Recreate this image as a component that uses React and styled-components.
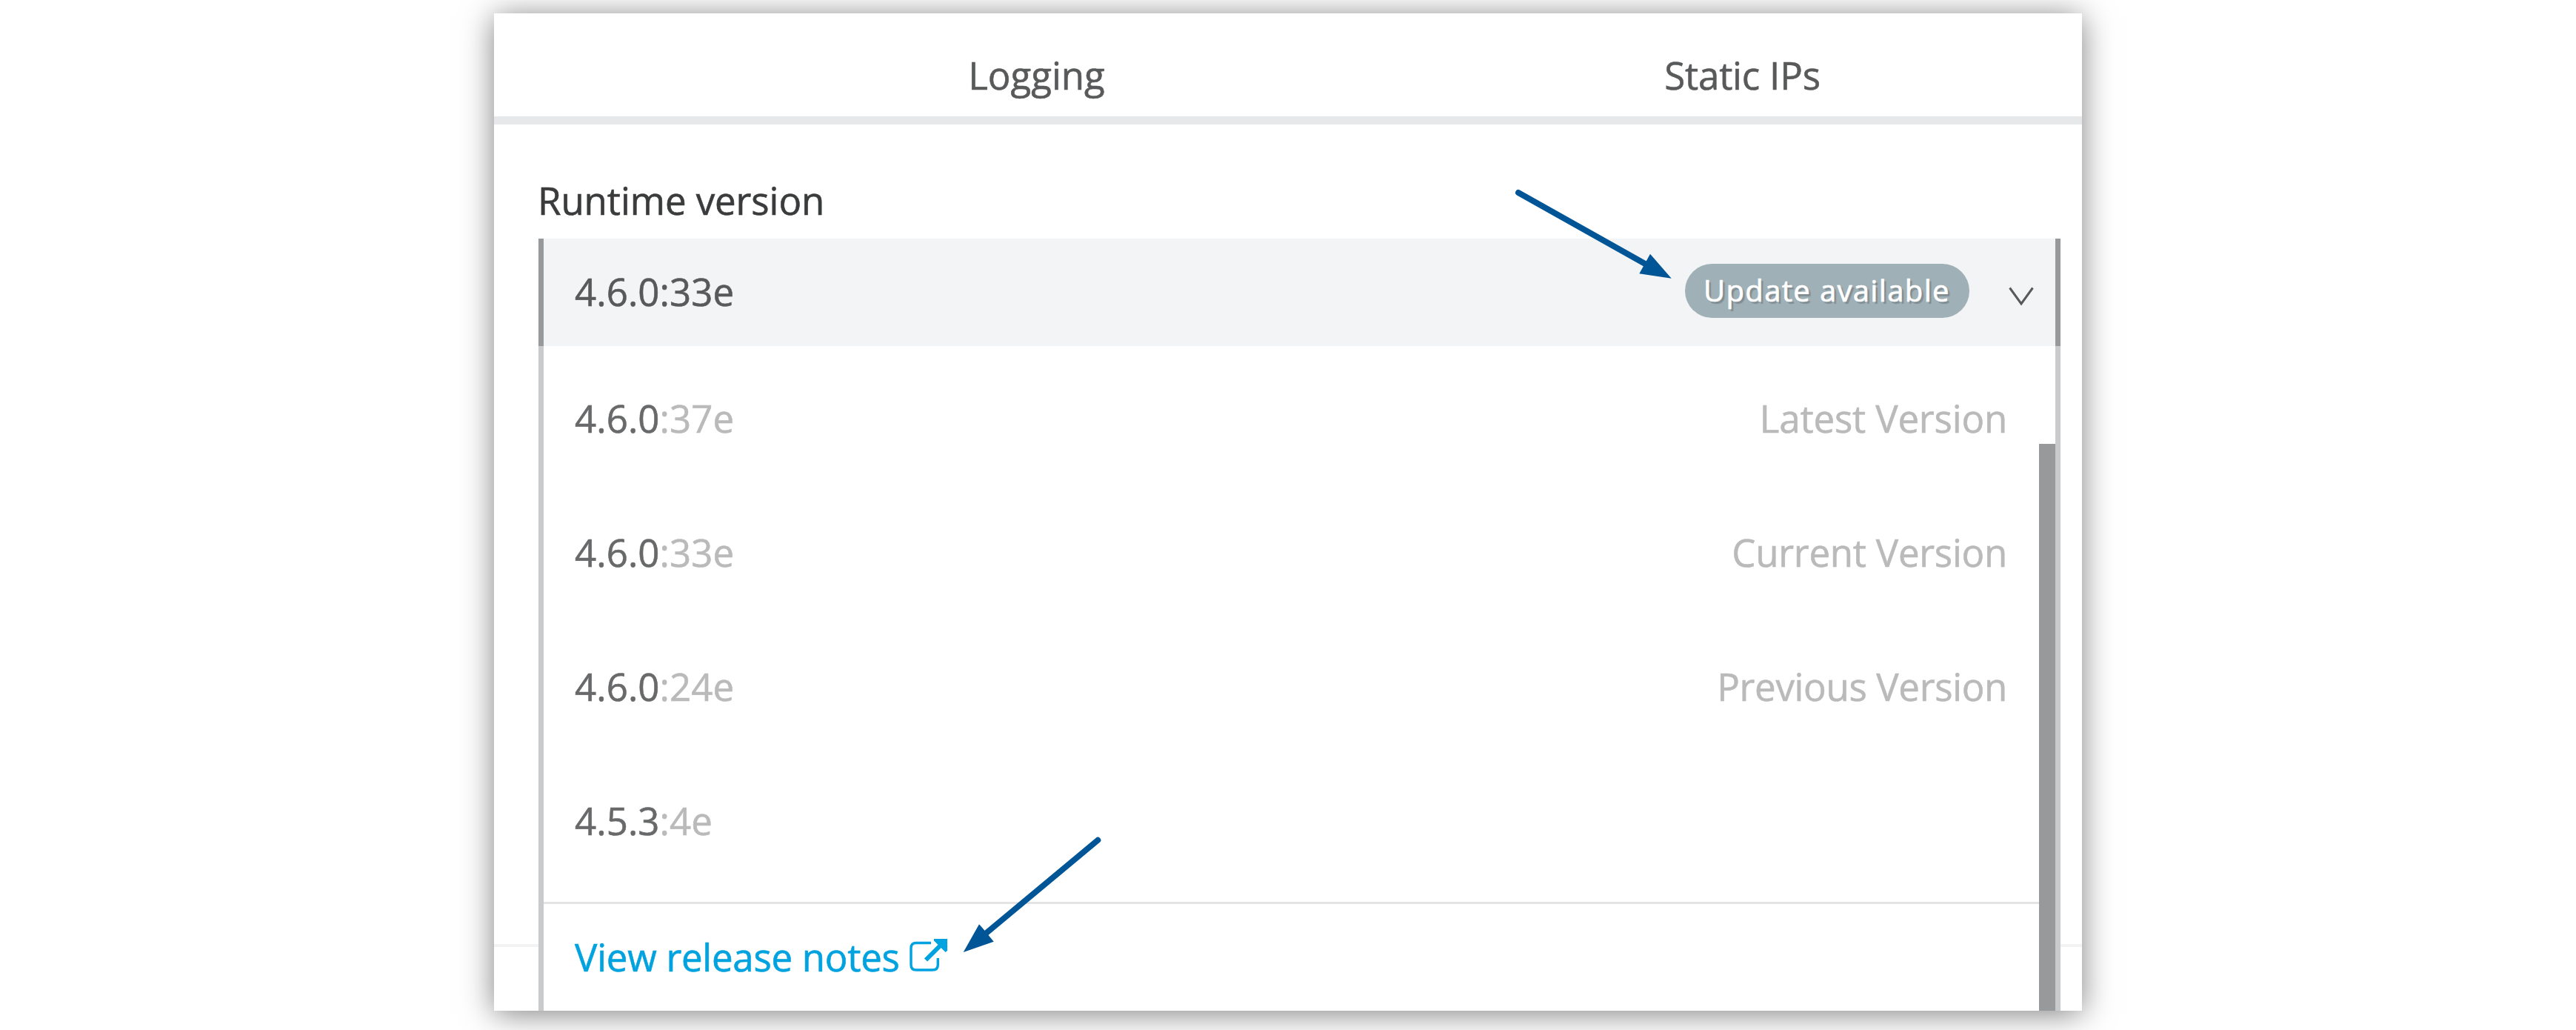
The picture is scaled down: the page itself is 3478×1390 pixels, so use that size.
import React from "react";
import styled, { createGlobalStyle } from "styled-components";

const Global = createGlobalStyle`
  * { box-sizing: border-box; }
  body {
    margin: 0;
    background: #fff;
    font-family: "Open Sans", "Noto Sans", sans-serif;
    -webkit-text-stroke: 0.6px currentColor;
    overflow: hidden;
  }
`;

const Page = styled.main`
  position: relative;
  display: flex;
  justify-content: center;
  width: 3478px;
  height: 1390px;
  padding-top: 18px;
  overflow: hidden;
  background: #fff;
`;

const Card = styled.section`
  display: flex;
  flex-direction: column;
  width: 2144px;
  height: 1346px;
  background: #fff;
  box-shadow: 0 4px 40px rgba(0, 0, 0, 0.5);
`;

const Tabs = styled.nav`
  display: flex;
  height: 150px;
  padding-left: 256px;
  border-bottom: 11px solid #e7e8ea;
  overflow: hidden;
`;

const Tab = styled.span`
  flex: none;
  width: 953px;
  padding-top: 48px;
  text-align: center;
  font-size: 51px;
  line-height: 70px;
  letter-spacing: ${({ $tracking = 0 }) => $tracking}px;
  color: #58595a;
`;

const Panel = styled.div`
  display: flex;
  flex: 1;
  flex-direction: column;
  background: linear-gradient(#f3f3f3, #f3f3f3) 0 1106px / 100% 4px no-repeat;
`;

const Label = styled.label`
  height: 154px;
  padding: 67px 0 0 59px;
  font-size: 51px;
  line-height: 70px;
  letter-spacing: -0.07px;
  color: #3a3b3c;
`;

const Select = styled.div`
  display: flex;
  align-items: center;
  width: 2055px;
  height: 145px;
  margin-left: 60px;
  padding: 0 29px 0 42px;
  border: solid #98999b;
  border-width: 0 7px;
  background: #f3f4f6;
`;

const Selected = styled.span`
  flex: 1;
  padding-bottom: 3px;
  font-size: 51px;
  letter-spacing: 0.06px;
  color: #58595a;
`;

const Badge = styled.span`
  width: 384px;
  height: 73px;
  margin: 0 51px 4px 0;
  padding-left: 25px;
  border-radius: 37px;
  background: #a0b0b7;
  color: #fff;
  font-size: 40px;
  line-height: 72px;
  letter-spacing: 1.35px;
  white-space: nowrap;
  -webkit-text-stroke: 0.7px #fff;
  text-shadow: 3px 3px 1px rgba(0, 0, 0, 0.2);
`;

const Chevron = styled.svg`
  width: 36px;
  height: 28px;
  margin-top: 11px;
`;

const Dropdown = styled.div`
  display: flex;
  flex: 1;
  width: 2055px;
  margin-left: 60px;
  border: solid #c9cacc;
  border-width: 0 7px;
  background: #fff;
`;

const Menu = styled.div`
  flex: 1;
  padding-top: 6px;
`;

const Option = styled.div`
  display: flex;
  justify-content: space-between;
  align-items: center;
  height: 181px;
  padding: 0 43px 0 42px;
  font-size: 51px;
  letter-spacing: 0.06px;
  color: #bababa;
`;

const Version = styled.b`
  font-weight: 400;
  color: #68696a;
`;

const Note = styled.span`
  letter-spacing: ${({ $tracking }) => $tracking}px;
`;

const Footer = styled.a`
  display: flex;
  align-items: center;
  height: 145px;
  margin-top: 20px;
  padding-left: 42px;
  border-top: 3px solid #e4e4e4;
  font-size: 51px;
  letter-spacing: -0.26px;
  color: #00a2df;
`;

const Scroll = styled.div`
  width: 22px;
  padding-top: 132px;
`;

const Thumb = styled.div`
  height: 100%;
  background: #98999b;
`;

const ExternalIcon = styled.svg`
  width: 51px;
  height: 45px;
  margin: 0 0 3px 13px;
`;

const Annotations = styled.svg`
  position: absolute;
  inset: 0;
  width: 3478px;
  height: 1390px;
  pointer-events: none;
`;

const options = [
  { version: "4.6.0", build: ":37e", note: "Latest Version", tracking: -0.17 },
  { version: "4.6.0", build: ":33e", note: "Current Version", tracking: -0.25 },
  { version: "4.6.0", build: ":24e", note: "Previous Version", tracking: -0.33 },
  { version: "4.5.3", build: ":4e" },
];

export default function App() {
  return (
    <Page>
      <Global />
      <Card>
        <Tabs>
          <Tab>Logging</Tab>
          <Tab $tracking={-0.19}>Static IPs</Tab>
        </Tabs>
        <Panel>
          <Label>Runtime version</Label>
          <Select>
            <Selected>4.6.0:33e</Selected>
            <Badge>Update available</Badge>
            <Chevron viewBox="0 0 36 28" fill="none" stroke="#58595a" strokeWidth="3">
              <path d="M3.500 2.500L19 24L34.500 2.500" />
            </Chevron>
          </Select>
          <Dropdown>
            <Menu>
              {options.map(({ version, build, note, tracking }) => (
                <Option key={version + build}>
                  <span><Version>{version}</Version>{build}</span>
                  {note && <Note $tracking={tracking}>{note}</Note>}
                </Option>
              ))}
              <Footer>
                View release notes
                <ExternalIcon viewBox="0 0 51 45" fill="none" stroke="#00a2df">
                  <path d="M29 5.500H9Q2 5.500 2 12.500V35Q2 42 9 42H31Q38.300 42 38.300 35V26" strokeWidth="3.400" />
                  <path d="M22 28.500L44 6.500" strokeWidth="6" />
                  <path d="M33 0H51V16L48.500 18L33 2.500Z" fill="#00a2df" stroke="none" />
                </ExternalIcon>
              </Footer>
            </Menu>
            <Scroll><Thumb /></Scroll>
          </Dropdown>
        </Panel>
      </Card>
      <Annotations viewBox="0 0 3478 1390" fill="#005596" stroke="#005596">
        <path d="M2050 260L2222 356.500" strokeWidth="8" strokeLinecap="round" />
        <path d="M2256.700 375.700L2228 342.700L2213.300 369.300Z" stroke="none" />
        <path d="M1482.300 1133.700L1330 1260.500" strokeWidth="8" strokeLinecap="round" />
        <path d="M1300.700 1285L1322 1247.300L1329.700 1256L1334.300 1261.700L1341.700 1270.700Z" stroke="none" />
      </Annotations>
    </Page>
  );
}
